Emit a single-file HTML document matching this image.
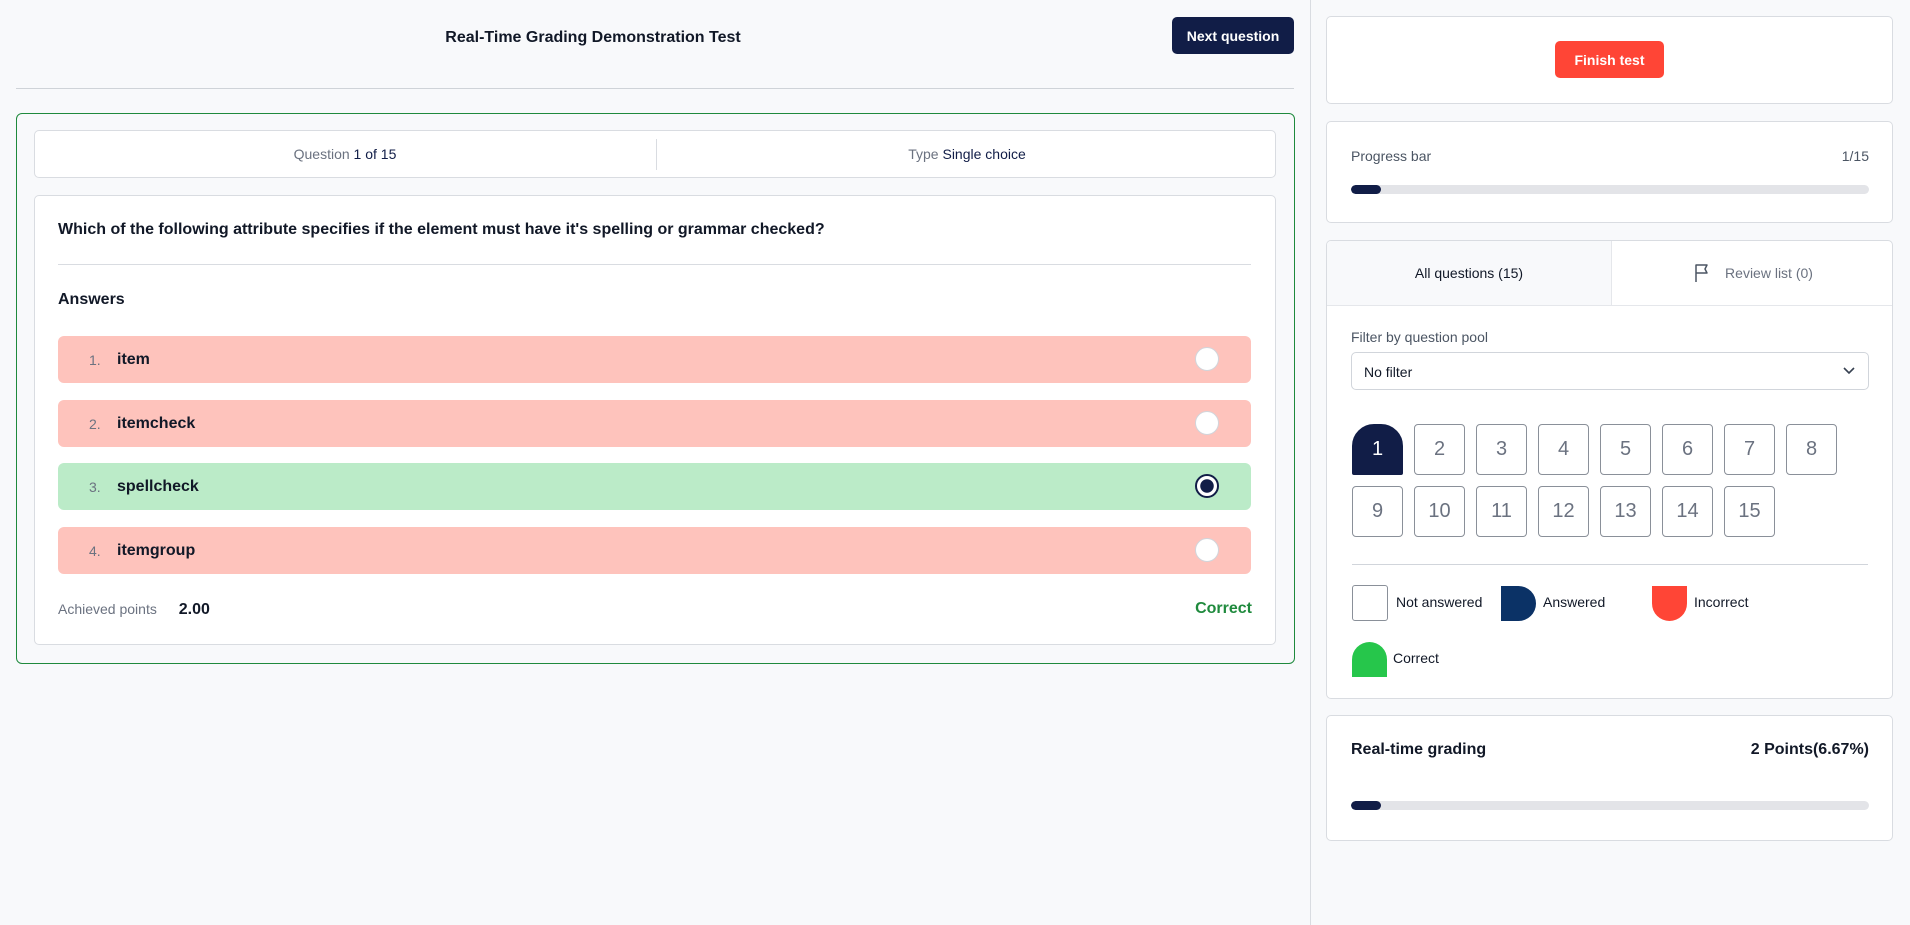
<!DOCTYPE html>
<html><head><meta charset="utf-8"><style>
*{box-sizing:border-box;margin:0;padding:0}
body{width:1910px;height:925px;background:#f8f9fb;font-family:"Liberation Sans",Arial,sans-serif;color:#111827;position:relative;overflow:hidden}
.a{position:absolute}
.card{position:absolute;background:#fff;border:1px solid #d9dce1;border-radius:5px}
.row{position:absolute;left:58px;width:1193px;height:47px;border-radius:6px;display:flex;align-items:center;font-size:16px;font-weight:bold}
.row .n{color:#6b7280;font-weight:normal;font-size:14px;margin-left:31px;width:28px}
.rad{position:absolute;right:32px;top:11px;width:24px;height:24px;border-radius:50%;background:#fff;border:1px solid #d1d5db}
.red{background:#fec3bc}.grn{background:#bbebc8}
.cell{position:absolute;width:51px;height:51px;border:1px solid #8a9099;border-radius:4px;background:#fff;color:#6b7280;font-size:20px;display:flex;align-items:center;justify-content:center}
.bar{position:absolute;left:1351px;width:518px;height:9px;background:#e3e4e8;border-radius:5px;overflow:hidden}
.bar i{display:block;width:30px;height:100%;background:#111d47;border-radius:5px}
.lg{position:absolute;font-size:14px}
</style></head><body>
<div class="a" style="left:1310px;top:0;width:1px;height:925px;background:#d9dce1"></div>
<div class="a" style="left:0;top:29px;width:1186px;text-align:center;font-size:16px;font-weight:bold">Real-Time Grading Demonstration Test</div>
<div class="a" style="left:1172px;top:17px;width:122px;height:37px;background:#111d47;color:#fff;border-radius:5px;font-size:14px;font-weight:bold;display:flex;align-items:center;justify-content:center">Next question</div>
<div class="a" style="left:16px;top:88px;width:1278px;height:1px;background:#cfd3d8"></div>
<div class="a" style="left:16px;top:113px;width:1279px;height:551px;border:1.5px solid #1f8a3d;border-radius:6px;background:#f8f9fb"></div>
<div class="card" style="left:34px;top:130px;width:1242px;height:48px;font-size:14px">
<div class="a" style="left:0;width:620px;top:15px;text-align:center;color:#6b7280">Question <span style="color:#111d47">1 of 15</span></div>
<div class="a" style="left:621px;top:8px;width:1px;height:31px;background:#d9dce1"></div>
<div class="a" style="left:622px;width:620px;top:15px;text-align:center;color:#6b7280">Type <span style="color:#111d47">Single choice</span></div>
</div>
<div class="card" style="left:34px;top:195px;width:1242px;height:450px"></div>
<div class="a" style="left:58px;top:221px;font-size:16px;font-weight:bold">Which of the following attribute specifies if the element must have it's spelling or grammar checked?</div>
<div class="a" style="left:58px;top:264px;width:1193px;height:1px;background:#d9dce1"></div>
<div class="a" style="left:58px;top:291px;font-size:16px;font-weight:bold">Answers</div>
<div class="row red" style="top:336px"><span class="n">1.</span>item<div class="rad"></div></div>
<div class="row red" style="top:400px"><span class="n">2.</span>itemcheck<div class="rad"></div></div>
<div class="row grn" style="top:463px"><span class="n">3.</span>spellcheck<div class="rad" style="border:2px solid #111d47;background:radial-gradient(circle,#111d47 0 6.5px,#fff 7px)"></div></div>
<div class="row red" style="top:527px"><span class="n">4.</span>itemgroup<div class="rad"></div></div>
<div class="a" style="left:58px;top:601px;font-size:14px;color:#6b7280">Achieved points <b style="color:#111827;font-size:16px;margin-left:18px">2.00</b></div>
<div class="a" style="left:1160px;top:600px;width:92px;text-align:right;font-size:16px;font-weight:bold;color:#1f8a3d">Correct</div>

<div class="card" style="left:1326px;top:16px;width:567px;height:88px"></div>
<div class="a" style="left:1555px;top:41px;width:109px;height:37px;background:#ff4536;color:#fff;border-radius:5px;font-size:14px;font-weight:bold;display:flex;align-items:center;justify-content:center">Finish test</div>
<div class="card" style="left:1326px;top:121px;width:567px;height:102px"></div>
<div class="a" style="left:1351px;top:148px;font-size:14px;color:#4b5563">Progress bar</div>
<div class="a" style="left:1820px;top:148px;width:49px;text-align:right;font-size:14px;color:#4b5563">1/15</div>
<div class="bar" style="top:185px"><i></i></div>

<div class="card" style="left:1326px;top:240px;width:567px;height:459px;overflow:hidden">
<div class="a" style="left:0;top:0;width:284px;height:65px;background:#f8f9fb;border-bottom:1px solid #e5e7eb;font-size:14px;display:flex;align-items:center;justify-content:center">All questions (15)</div>
<div class="a" style="left:284px;top:0;width:283px;height:65px;border-left:1px solid #e5e7eb;border-bottom:1px solid #e5e7eb;font-size:14px;color:#6b7280;display:flex;align-items:center;justify-content:center"><svg width="18" height="20" viewBox="0 0 18 20" style="margin-right:14px"><path d="M3 19V2h11l-2 4 2 4H3" fill="none" stroke="#4b5563" stroke-width="1.5" stroke-linejoin="round"/></svg>Review list (0)</div>
</div>
<div class="a" style="left:1351px;top:329px;font-size:14px;color:#4b5563">Filter by question pool</div>
<div class="a" style="left:1351px;top:352px;width:518px;height:38px;border:1px solid #d1d5db;border-radius:5px;background:#fff;font-size:14px;padding:11px 12px">No filter<svg class="a" style="right:12px;top:12px" width="14" height="10" viewBox="0 0 14 10"><path d="M2 3l5 5 5-5" fill="none" stroke="#374151" stroke-width="1.6"/></svg></div>
<div class="cell" style="left:1352px;top:424px;background:#111d47;color:#fff;border-color:#111d47;border-radius:22px 22px 2px 2px">1</div>
<div class="cell" style="left:1414px;top:424px">2</div><div class="cell" style="left:1476px;top:424px">3</div><div class="cell" style="left:1538px;top:424px">4</div><div class="cell" style="left:1600px;top:424px">5</div><div class="cell" style="left:1662px;top:424px">6</div><div class="cell" style="left:1724px;top:424px">7</div><div class="cell" style="left:1786px;top:424px">8</div>
<div class="cell" style="left:1352px;top:486px">9</div><div class="cell" style="left:1414px;top:486px">10</div><div class="cell" style="left:1476px;top:486px">11</div><div class="cell" style="left:1538px;top:486px">12</div><div class="cell" style="left:1600px;top:486px">13</div><div class="cell" style="left:1662px;top:486px">14</div><div class="cell" style="left:1724px;top:486px">15</div>
<div class="a" style="left:1352px;top:564px;width:516px;height:1px;background:#d1d5db"></div>
<div class="a" style="left:1352px;top:585px;width:36px;height:36px;border:1px solid #8a9099;border-radius:3px;background:#fff"></div>
<div class="lg" style="left:1396px;top:594px">Not answered</div>
<div class="a" style="left:1501px;top:586px;width:35px;height:35px;background:#0b3266;border-radius:0 18px 18px 0"></div>
<div class="lg" style="left:1543px;top:594px">Answered</div>
<div class="a" style="left:1652px;top:586px;width:35px;height:35px;background:#ff4536;border-radius:0 0 18px 18px"></div>
<div class="lg" style="left:1694px;top:594px">Incorrect</div>
<div class="a" style="left:1352px;top:642px;width:35px;height:35px;background:#26c64b;border-radius:18px 18px 0 0"></div>
<div class="lg" style="left:1393px;top:650px">Correct</div>

<div class="card" style="left:1326px;top:715px;width:567px;height:126px"></div>
<div class="a" style="left:1351px;top:741px;font-size:16px;font-weight:bold">Real-time grading</div>
<div class="a" style="left:1700px;top:741px;width:169px;text-align:right;font-size:16px;font-weight:bold">2 Points(6.67%)</div>
<div class="bar" style="top:801px"><i></i></div>
</body></html>
